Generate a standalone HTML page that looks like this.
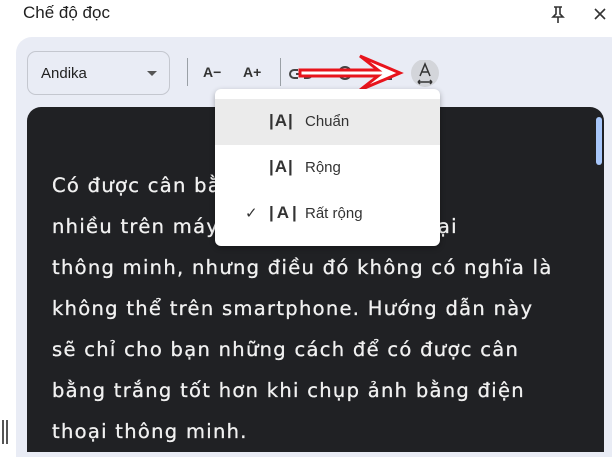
<!DOCTYPE html>
<html><head><meta charset="utf-8"><style>
*{margin:0;padding:0;box-sizing:border-box}
body{width:612px;height:444px;overflow:hidden;background:#fff;font-family:"Liberation Sans","DejaVu Sans",sans-serif;position:relative}
.title{position:absolute;left:23px;top:3px;font-size:17px;color:#1f1f1f}
.panel{position:absolute;left:16px;top:37px;width:610px;height:420px;background:#e9ecf5;border-radius:16px 16px 0 0}
.dd{position:absolute;left:27px;top:51px;width:143px;height:44px;border:1px solid #c4c7cf;border-radius:9px;font-size:15px;color:#1f1f1f;padding:13px 0 0 13px}
.dd:after{content:"";position:absolute;right:12px;top:19px;border:5px solid transparent;border-top-color:#555}
.sep{position:absolute;top:58px;width:1px;height:28px;background:#9aa0a6}
.tb{position:absolute;top:64px;font-size:14px;font-weight:bold;color:#333}
.content{position:absolute;left:27px;top:107px;width:577px;height:345px;background:#202124;border-radius:14px 14px 0 0}
.txt{position:absolute;left:52px;top:165px;font-family:"DejaVu Sans",sans-serif;font-size:19.5px;letter-spacing:1.3px;color:#f1f1f1;line-height:41px;white-space:pre;-webkit-text-stroke:0.3px #f1f1f1}
.scroll{position:absolute;left:596px;top:117px;width:6px;height:48px;background:#a8c7fa;border-radius:3px}
.menu{position:absolute;left:215px;top:89px;width:225px;height:157px;background:#fff;border-radius:6px;box-shadow:0 2px 6px rgba(0,0,0,.3)}
.row{position:absolute;left:0;width:225px;height:46px;font-size:15px;color:#333}
.row .ic{position:absolute;left:54px;top:12px;font-size:17px;font-weight:bold;letter-spacing:1px}
.row .lb{position:absolute;left:90px;top:14px}
</style></head><body>
<div class="title">Chế độ đọc</div>
<svg style="position:absolute;left:548px;top:4px" width="60" height="20"><path d="M6 3h8M8 3v7l-3 3h10l-3-3V3M10 13v6" stroke="#333" stroke-width="1.6" fill="none"/><path d="M47 5l10 10M57 5L47 15" stroke="#333" stroke-width="1.6"/></svg>
<div class="panel"></div>
<div class="dd">Andika</div>
<div class="sep" style="left:187px"></div>
<div class="tb" style="left:203px">A−</div>
<div class="tb" style="left:243px">A+</div>
<div class="sep" style="left:280px"></div>
<svg style="position:absolute;left:288px;top:60px" width="160" height="30">
<path d="M10 10h-4a4 4 0 0 0 0 8h4M16 10h4a4 4 0 0 1 0 8h-4M8 14h10" stroke="#444" stroke-width="2" fill="none"/>
<circle cx="57" cy="13" r="6" stroke="#444" stroke-width="2" fill="none"/>
<path d="M92 6v16M98 9h6M98 14h6M98 19h6" stroke="#444" stroke-width="2"/>
<circle cx="137" cy="13" r="14" fill="#d3d5da"/>
<path d="M132 16l5-12 5 12M134 12h6M130 22h14M130 22l2-2M130 22l2 2M144 22l-2-2M144 22l-2 2" stroke="#333" stroke-width="1.5" fill="none"/>
</svg>
<svg style="position:absolute;left:295px;top:50px" width="130" height="50"><path d="M5 20h78l-18-14 40 17-40 17 18-14H5z" fill="#fff" stroke="#e8141c" stroke-width="3" stroke-linejoin="miter"/></svg>
<div class="content"></div>
<div class="scroll"></div>
<div class="txt">Có được cân bằng trắng dễ hơn
nhiều trên máy ảnh so với điện thoại
thông minh, nhưng điều đó không có nghĩa là
không thể trên smartphone. Hướng dẫn này
sẽ chỉ cho bạn những cách để có được cân
bằng trắng tốt hơn khi chụp ảnh bằng điện
thoại thông minh.</div>
<div class="menu">
<div class="row" style="top:10px;background:#ebebeb"><span class="ic">|A|</span><span class="lb">Chuẩn</span></div>
<div class="row" style="top:56px"><span class="ic">|A|</span><span class="lb">Rộng</span></div>
<div class="row" style="top:102px"><span style="position:absolute;left:30px;top:13px;font-size:15px">✓</span><span class="ic" style="letter-spacing:3px">|A|</span><span class="lb">Rất rộng</span></div>
</div>
<div style="position:absolute;left:2px;top:420px;width:6px;height:24px;border-left:2px solid #555;border-right:2px solid #555"></div>
</body></html>
